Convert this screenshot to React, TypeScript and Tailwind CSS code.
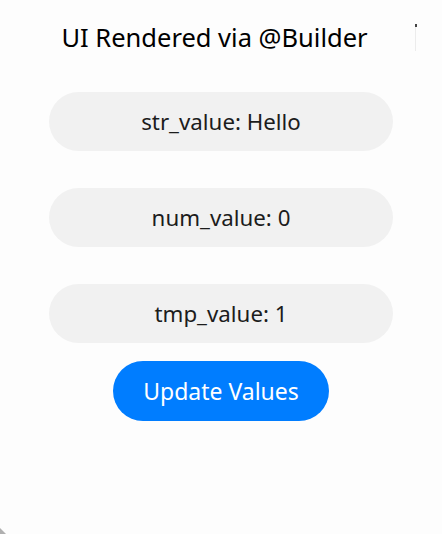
import { useState } from 'react'

export default function App() {
  const [str] = useState('Hello')
  const [num] = useState(0)
  const [tmp] = useState(1)

  const rows = [`str_value: ${str}`, `num_value: ${num}`, `tmp_value: ${tmp}`]

  return (
    <div className="relative w-[442px] h-[534px] overflow-hidden bg-[#fdfdfd] font-['Noto_Sans','Roboto',sans-serif]">
      {/* window corner */}
      <div className="absolute left-0 bottom-0 w-[6px] h-[6px] bg-[#b0b0b0] [clip-path:polygon(0_0,100%_100%,0_100%)]" />
      {/* caret mark */}
      <div className="absolute left-[415px] top-[24px] w-[2px] h-[3px] bg-[#444]" />
      <div className="absolute left-[415px] top-[27px] w-px h-[24px] bg-[#ececec]" />

      <div className="flex flex-col items-center">
        <h1 className="mt-[20px] mr-[13px] h-[34px] text-[25.5px] leading-[34px] text-black">UI Rendered via @Builder</h1>

        <div className="mt-[38px] flex flex-col gap-[37px]">
          {rows.map(r => (
            <div
              key={r}
              className="w-[344px] h-[59px] rounded-full bg-[#f1f1f1] flex items-center justify-center text-[22.3px] text-[#1c1c1c]"
            >
              {r}
            </div>
          ))}
        </div>

        <button className="mt-[18px] w-[216px] h-[60px] rounded-full bg-[#007dff] text-white text-[23px] flex items-center justify-center">
          Update Values
        </button>
      </div>
    </div>
  )
}
